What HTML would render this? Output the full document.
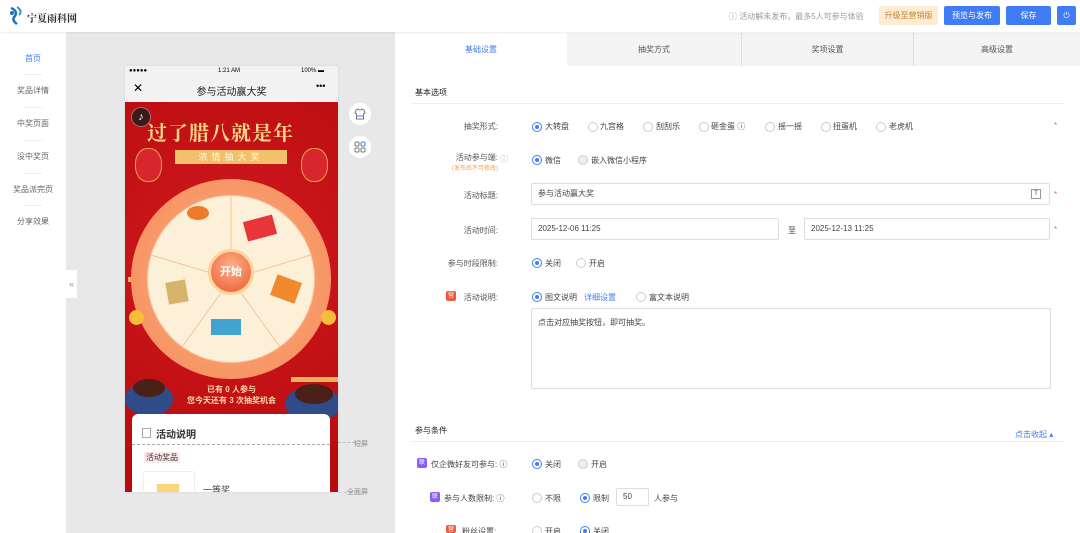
<!DOCTYPE html>
<html><head><meta charset="utf-8"><style>
*{box-sizing:border-box;margin:0;padding:0}
html{width:1080px;height:533px;overflow:hidden}
body{width:1080px;height:533px;overflow:hidden;background:#e8e8e8;font-family:"Liberation Sans","Noto Sans CJK SC",sans-serif;font-size:8px;color:#555;position:relative}
.a{position:absolute}
.top{left:0;top:0;width:1080px;height:32px;background:#fff;box-shadow:0 1px 2px rgba(0,0,0,.08);z-index:2}
.btn{position:absolute;top:6px;height:19px;border-radius:2px;font-size:8px;line-height:19px;text-align:center;color:#fff;background:#3f7cf6}
.side{left:0;top:32px;width:66px;height:501px;background:#fff}
.side div{position:absolute;left:0;width:66px;text-align:center;font-size:8px;color:#666}
.side i{position:absolute;left:24px;width:18px;border-top:1px solid #eee}
.panel{left:395px;top:32px;width:685px;height:501px;background:#fff}
.tab{position:absolute;top:1px;height:33px;line-height:33px;text-align:center;background:#f4f4f4;color:#555}
.lbl{position:absolute;text-align:right;color:#555;font-size:8px}
.r{position:absolute;width:10px;height:10px;border:1px solid #ccc;border-radius:50%;background:#fff}
.r.on{border-color:#3f7cf6}
.r.on:after{content:"";position:absolute;left:2px;top:2px;width:4px;height:4px;border-radius:50%;background:#3f7cf6}
.t{position:absolute;font-size:8px;color:#444;white-space:nowrap}
.inp{position:absolute;border:1px solid #ddd;border-radius:2px;background:#fff;font-size:8px;color:#444;padding-left:6px}
.star{position:absolute;color:#f56;font-size:8px}
.tag{position:absolute;width:10px;height:10px;border-radius:2px;color:#fff;font-size:6px;line-height:10px;text-align:center}
</style></head><body>
<div class="a top">
 <svg class="a" style="left:8px;top:5px" width="20" height="22" viewBox="0 0 20 22"><path d="M3 3 Q10 6 7 11 Q3 15 9 19" stroke="#1c6fb8" stroke-width="2.5" fill="none"/><path d="M9 2 Q15 6 11 10" stroke="#2a9ad6" stroke-width="2" fill="none"/><circle cx="4" cy="8" r="2" fill="#1c6fb8"/></svg>
 <div class="a" style="left:27px;top:10px;font-size:10px;color:#333;font-family:'Noto Serif CJK SC',serif;font-weight:bold">宁夏雨科网</div>
 <div class="a" style="left:729px;top:11px;font-size:8px;color:#999">ⓘ 活动解未发布，最多5人可参与体验</div>
 <div class="btn" style="left:879px;width:59px;background:#fdebd3;color:#c8842c">升级至营销版</div>
 <div class="btn" style="left:944px;width:56px">预览与发布</div>
 <div class="btn" style="left:1006px;width:45px">保存</div>
 <div class="btn" style="left:1057px;width:19px">⏻</div>
</div>
<div class="a side">
 <div style="top:21px;color:#3f7cf6">首页</div><i style="top:42px"></i>
 <div style="top:53px">奖品详情</div><i style="top:75px"></i>
 <div style="top:86px">中奖页面</div><i style="top:108px"></i>
 <div style="top:119px">没中奖页</div><i style="top:141px"></i>
 <div style="top:152px">奖品派完页</div><i style="top:173px"></i>
 <div style="top:184px">分享效果</div>
</div>
<div class="a" style="left:66px;top:270px;width:11px;height:28px;background:#fff;color:#999;font-size:9px;line-height:28px;text-align:center">«</div>

<!-- phone -->
<div class="a" style="left:125px;top:66px;width:213px;height:426px;background:#b80b0f;overflow:hidden;box-shadow:0 0 2px rgba(0,0,0,.1)">
 <div class="a" style="left:0;top:0;width:213px;height:36px;background:#f2f2f2"></div>
 <div class="a" style="left:4px;top:2px;font-size:6px;color:#000">●●●●●</div>
 <div class="a" style="left:93px;top:2px;font-size:6px;color:#000">1:21 AM</div>
 <div class="a" style="left:176px;top:2px;font-size:6px;color:#000">100% ▬</div>
 <div class="a" style="left:8px;top:15px;font-size:12px;color:#000">✕</div>
 <div class="a" style="left:0;top:17px;width:213px;text-align:center;font-size:10px;color:#222">参与活动赢大奖</div>
 <div class="a" style="left:191px;top:15px;font-size:9px;color:#000">•••</div>
 <div class="a" style="left:0;top:36px;width:213px;height:390px;background:radial-gradient(circle at 50% 40%,#d11a1e,#b50a0e)"></div>
 <div class="a" style="left:6px;top:41px;width:20px;height:20px;border-radius:50%;background:#3a1b1b;border:1px solid #a66;color:#fff;font-size:11px;text-align:center;line-height:18px">♪</div>
 <div class="a" style="left:22px;top:51px;font-size:20px;color:#fbd78a;font-weight:bold;font-family:'Noto Serif CJK SC',serif;letter-spacing:1px">过了腊八就是年</div>
 <div class="a" style="left:50px;top:84px;width:112px;height:14px;background:#f3c06b;color:#fff7df;font-size:9px;text-align:center;line-height:14px;letter-spacing:4px">浓情抽大奖</div>
 <div class="a" style="left:10px;top:82px;width:27px;height:34px;border-radius:45%;background:#d8272c;border:1px solid #e6a04a"></div>
 <div class="a" style="left:176px;top:82px;width:27px;height:34px;border-radius:45%;background:#d8272c;border:1px solid #e6a04a"></div>
 <div class="a" style="left:3px;top:211px;width:52px;height:5px;background:#e7b35a"></div>
 <div class="a" style="left:166px;top:311px;width:47px;height:5px;background:#e7b35a"></div>
 <div class="a" style="left:6px;top:113px;width:200px;height:200px;border-radius:50%;background:radial-gradient(circle,#fbb888 0,#f68d5d 85%,#fbc4a1 100%)"></div>
 <div class="a" style="left:22px;top:129px;width:168px;height:168px;border-radius:50%;background:#fdf0d8;border:1px solid #f7c6a0"></div>
 <svg class="a" style="left:22px;top:129px" width="168" height="168" viewBox="0 0 168 168"><g stroke="#f6c39a" stroke-width="1"><line x1="84" y1="84" x2="84" y2="0"/><line x1="84" y1="84" x2="164" y2="60"/><line x1="84" y1="84" x2="133" y2="152"/><line x1="84" y1="84" x2="35" y2="152"/><line x1="84" y1="84" x2="4" y2="60"/></g></svg>
 <div class="a" style="left:62px;top:140px;width:22px;height:14px;border-radius:50%;background:#ef7a2a"></div>
 <div class="a" style="left:120px;top:152px;width:30px;height:20px;background:#e8353a;transform:rotate(-15deg)"></div>
 <div class="a" style="left:148px;top:212px;width:26px;height:22px;background:#f08a2c;transform:rotate(20deg)"></div>
 <div class="a" style="left:86px;top:253px;width:30px;height:16px;background:#42a3d1"></div>
 <div class="a" style="left:42px;top:215px;width:20px;height:22px;background:#d7b46c;transform:rotate(-10deg)"></div>
 <div class="a" style="left:83px;top:183px;width:46px;height:46px;border-radius:50%;background:radial-gradient(circle at 50% 35%,#fbb08c,#ec5a2e);border:3px solid #ffd39a;color:#fff;font-size:11px;font-weight:bold;text-align:center;line-height:40px">开始</div>
 <div class="a" style="left:4px;top:244px;width:15px;height:15px;border-radius:50%;background:#f5bd3b"></div>
 <div class="a" style="left:196px;top:244px;width:15px;height:15px;border-radius:50%;background:#f5bd3b"></div>
 <div class="a" style="left:0;top:316px;width:48px;height:34px;border-radius:50%;background:#2f4c88"></div>
 <div class="a" style="left:8px;top:313px;width:32px;height:18px;border-radius:50%;background:#4a2018"></div>
 <div class="a" style="left:160px;top:320px;width:56px;height:36px;border-radius:50%;background:#2f4c88"></div>
 <div class="a" style="left:170px;top:318px;width:38px;height:20px;border-radius:50%;background:#4a2018"></div>
 <div class="a" style="left:0;top:318px;width:213px;text-align:center;color:#ffd6a8;font-size:8px;font-weight:bold;line-height:11px">已有 0 人参与<br>您今天还有 3 次抽奖机会</div>
 <div class="a" style="left:7px;top:348px;width:198px;height:90px;background:#fff;border-radius:6px"></div>
 <div class="a" style="left:17px;top:362px;width:9px;height:10px;border:1px solid #aaa"></div>
 <div class="a" style="left:31px;top:360px;font-size:10px;color:#333;font-weight:bold">活动说明</div>
 <div class="a" style="left:7px;top:378px;width:198px;border-top:1px dashed #aaa"></div>
 <div class="a" style="left:19px;top:386px;font-size:8px;color:#333;background:#fde8ec;padding:0 2px">活动奖品</div>
 <div class="a" style="left:18px;top:405px;width:52px;height:30px;border:1px solid #eee;border-radius:3px"></div>
 <div class="a" style="left:32px;top:418px;width:22px;height:10px;background:#fcd579"></div>
 <div class="a" style="left:78px;top:417px;font-size:9px;color:#444">一等奖</div>
</div>
<div class="a" style="left:338px;top:442px;width:17px;border-top:1px dashed #bbb"></div>
<div class="a" style="left:338px;top:492px;width:9px;border-top:1px dashed #ccc"></div>
<div class="a" style="left:354px;top:439px;font-size:7px;color:#888">短屏</div>
<div class="a" style="left:347px;top:487px;font-size:7px;color:#888">全面屏</div>
<div class="a" style="left:349px;top:103px;width:22px;height:22px;border-radius:50%;background:#fff"><svg width="22" height="22"><path d="M7 7 L9.5 6 Q11 8 12.5 6 L15 7 L16 10 L14.5 10.5 L14.5 16 L7.5 16 L7.5 10.5 L6 10 Z" fill="none" stroke="#777" stroke-width="1"/><line x1="7.5" y1="13" x2="14.5" y2="13" stroke="#3f7cf6"/></svg></div>
<div class="a" style="left:349px;top:136px;width:22px;height:22px;border-radius:50%;background:#fff"><svg width="22" height="22"><g fill="none" stroke="#777" stroke-width="1"><rect x="6" y="6" width="4" height="4" rx="1"/><rect x="12" y="6" width="4" height="4" rx="1" stroke="#3f7cf6"/><rect x="6" y="12" width="4" height="4" rx="1"/><rect x="12" y="12" width="4" height="4" rx="1"/></g></svg></div>

<!-- right panel -->
<div class="a panel">
 <div class="tab" style="left:0;width:172px;background:#fff;color:#3f7cf6">基础设置</div>
 <div class="tab" style="left:172px;width:174px">抽奖方式</div>
 <div class="tab" style="left:346px;width:172px;border-left:1px solid #ddd">奖项设置</div>
 <div class="tab" style="left:518px;width:167px;border-left:1px solid #ddd">高级设置</div>
</div>
<div class="t" style="left:415px;top:87px;color:#222">基本选项</div>
<div class="a" style="left:412px;top:103px;width:653px;border-top:1px solid #eee"></div>

<div class="lbl" style="left:430px;top:121px;width:68px">抽奖形式:</div>
<div class="r on" style="left:532px;top:122px"></div><div class="t" style="left:545px;top:121px">大转盘</div>
<div class="r" style="left:588px;top:122px"></div><div class="t" style="left:600px;top:121px">九宫格</div>
<div class="r" style="left:643px;top:122px"></div><div class="t" style="left:656px;top:121px">刮刮乐</div>
<div class="r" style="left:699px;top:122px"></div><div class="t" style="left:711px;top:121px">砸金蛋 ⓘ</div>
<div class="r" style="left:765px;top:122px"></div><div class="t" style="left:778px;top:121px">摇一摇</div>
<div class="r" style="left:821px;top:122px"></div><div class="t" style="left:833px;top:121px">扭蛋机</div>
<div class="r" style="left:876px;top:122px"></div><div class="t" style="left:889px;top:121px">老虎机</div>
<div class="star" style="left:1054px;top:121px">*</div>

<div class="lbl" style="left:430px;top:152px;width:68px">活动参与端:</div>
<div class="t" style="left:500px;top:154px;color:#aaa">ⓘ</div>
<div class="lbl" style="left:430px;top:163px;width:68px;color:#f0a050;font-size:6px">(发布后不可修改)</div>
<div class="r on" style="left:532px;top:155px"></div><div class="t" style="left:545px;top:155px">微信</div>
<div class="r" style="left:578px;top:155px;background:#eee"></div><div class="t" style="left:591px;top:155px">嵌入微信小程序</div>

<div class="lbl" style="left:430px;top:190px;width:68px">活动标题:</div>
<div class="inp" style="left:531px;top:183px;width:519px;height:22px;line-height:20px">参与活动赢大奖<span style="position:absolute;right:8px;top:5px;width:10px;height:10px;border:1px solid #999;font-size:6px;line-height:8px;text-align:center">T</span></div>
<div class="star" style="left:1054px;top:190px">*</div>

<div class="lbl" style="left:430px;top:225px;width:68px">活动时间:</div>
<div class="inp" style="left:531px;top:218px;width:248px;height:22px;line-height:20px">2025-12-06 11:25</div>
<div class="t" style="left:788px;top:225px">至</div>
<div class="inp" style="left:804px;top:218px;width:246px;height:22px;line-height:20px">2025-12-13 11:25</div>
<div class="star" style="left:1054px;top:225px">*</div>

<div class="lbl" style="left:430px;top:258px;width:68px">参与时段限制:</div>
<div class="r on" style="left:532px;top:258px"></div><div class="t" style="left:545px;top:258px">关闭</div>
<div class="r" style="left:576px;top:258px"></div><div class="t" style="left:589px;top:258px">开启</div>

<div class="tag" style="left:446px;top:291px;background:#f05a3a">营</div>
<div class="lbl" style="left:430px;top:292px;width:68px">活动说明:</div>
<div class="r on" style="left:532px;top:292px"></div><div class="t" style="left:545px;top:292px">图文说明</div>
<div class="t" style="left:584px;top:292px;color:#3f7cf6">详细设置</div>
<div class="r" style="left:636px;top:292px"></div><div class="t" style="left:649px;top:292px">富文本说明</div>
<div class="inp" style="left:531px;top:308px;width:520px;height:81px;padding:8px 6px">点击对应抽奖按钮，即可抽奖。</div>

<div class="t" style="left:415px;top:425px;color:#222">参与条件</div>
<div class="t" style="left:1015px;top:429px;color:#3f7cf6">点击收起 ▴</div>
<div class="a" style="left:412px;top:441px;width:653px;border-top:1px solid #eee"></div>

<div class="tag" style="left:417px;top:458px;background:#8b5cf6">联</div>
<div class="t" style="left:431px;top:459px">仅企微好友可参与: ⓘ</div>
<div class="r on" style="left:532px;top:459px"></div><div class="t" style="left:545px;top:459px">关闭</div>
<div class="r" style="left:578px;top:459px;background:#eee"></div><div class="t" style="left:591px;top:459px">开启</div>

<div class="tag" style="left:430px;top:492px;background:#8b5cf6">联</div>
<div class="t" style="left:444px;top:493px">参与人数限制: ⓘ</div>
<div class="r" style="left:532px;top:493px"></div><div class="t" style="left:545px;top:493px">不限</div>
<div class="r on" style="left:580px;top:493px"></div><div class="t" style="left:593px;top:493px">限制</div>
<div class="inp" style="left:616px;top:488px;width:33px;height:18px;line-height:16px">50</div>
<div class="t" style="left:654px;top:493px">人参与</div>

<div class="tag" style="left:446px;top:525px;background:#f05a3a;height:8px">营</div>
<div class="t" style="left:462px;top:526px;height:7px;overflow:hidden">粉丝设置:</div>
<div class="r" style="left:532px;top:526px;height:7px;border-radius:5px 5px 0 0;border-bottom:none"></div><div class="t" style="left:545px;top:526px;height:7px;overflow:hidden">开启</div>
<div class="r on" style="left:580px;top:526px;height:7px;border-radius:5px 5px 0 0;border-bottom:none"></div><div class="t" style="left:593px;top:526px;height:7px;overflow:hidden">关闭</div>
</body></html>
